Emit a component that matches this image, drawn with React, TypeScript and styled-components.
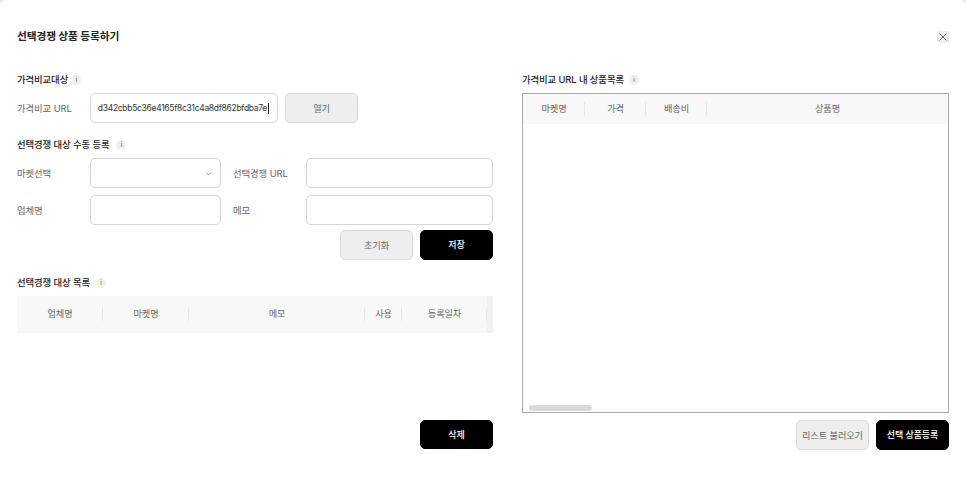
import React from 'react';
import styled, { createGlobalStyle } from 'styled-components';

const GlobalStyle = createGlobalStyle`
  html, body {
    margin: 0;
    padding: 0;
    background: #ececec;
  }
  * {
    box-sizing: border-box;
  }
`;

const Modal = styled.div`
  width: 966px;
  height: 479px;
  padding: 29px 17px 0 17px;
  overflow: hidden;
  border-radius: 7px 7px 0 0;
  background: #fff;
  color: #222;
  font-family: Inter, "Noto Sans CJK KR", sans-serif;
  font-size: 9.4px;
  letter-spacing: -0.1px;
`;

const Header = styled.header`
  display: flex;
  align-items: center;
  justify-content: space-between;
  height: 16px;
`;

const ModalTitle = styled.h1`
  margin: 0;
  font-size: 10.7px;
  font-weight: 700;
  line-height: 16px;
  color: #222;
`;

const CloseButton = styled.button`
  display: flex;
  align-items: center;
  justify-content: center;
  width: 12px;
  height: 12px;
  padding: 0;
  border: 0;
  border-radius: 2px;
  background: #eeeeee;
  color: #666;
`;

const Columns = styled.div`
  display: grid;
  grid-template-columns: 476px 427px;
  justify-content: space-between;
  margin-top: 29px;
`;

const Column = styled.section`
  display: flex;
  flex-direction: column;
`;

const SectionTitle = styled.h2<{ $gap?: number }>`
  display: flex;
  align-items: center;
  gap: ${(p) => p.$gap ?? 3}px;
  height: 12px;
  margin: 0;
  font-size: 9.4px;
  font-weight: 500;
  line-height: 12px;
  color: #222;
`;

const InfoDot = styled.span`
  display: inline-flex;
  align-items: center;
  justify-content: center;
  width: 10px;
  height: 10px;
  border-radius: 50%;
  background: #f0f0f0;
  color: #777;
  font-size: 6px;
  font-weight: 600;
`;

const UrlRow = styled.div`
  display: flex;
  align-items: center;
  height: 30px;
  margin-top: 7px;
`;

const FieldLabel = styled.label<{ $width: number }>`
  flex: none;
  width: ${(p) => p.$width}px;
  color: #666;
`;

const Box = styled.div<{ $width: number }>`
  display: flex;
  align-items: center;
  flex: none;
  width: ${(p) => p.$width}px;
  height: 30px;
  border: 1px solid #d6d6d6;
  border-radius: 5px;
  background: #fff;
`;

const UrlBox = styled(Box)`
  justify-content: flex-end;
  padding-right: 8px;
  overflow: hidden;
`;

const UrlValue = styled.span`
  flex: none;
  color: #333;
  font-size: 8.5px;
  letter-spacing: -0.3px;
  white-space: nowrap;
`;

const Caret = styled.i`
  flex: none;
  width: 1px;
  height: 11px;
  margin-left: 1px;
  background: #222;
`;

const SelectBox = styled(Box)`
  justify-content: flex-end;
  padding-right: 8px;
  color: #888;
`;

const Button = styled.button<{ $primary?: boolean; $width?: number }>`
  flex: none;
  width: ${(p) => p.$width ?? 73}px;
  height: 29.5px;
  padding: 0;
  border: 1px solid ${(p) => (p.$primary ? '#000' : '#d9d9d9')};
  border-radius: 5px;
  background: ${(p) => (p.$primary ? '#000' : '#eeeeee')};
  color: ${(p) => (p.$primary ? '#fff' : '#666')};
  font-family: inherit;
  font-size: ${(p) => (p.$primary ? 9 : 9.2)}px;
  font-weight: ${(p) => (p.$primary ? 500 : 400)};
  letter-spacing: -0.1px;
`;

const OpenButton = styled(Button)`
  margin-left: 7px;
`;

const ManualTitle = styled(SectionTitle)`
  margin-top: 16px;
`;

const FormGrid = styled.div`
  display: grid;
  grid-template-columns: 73px 131px 85px 187px;
  grid-auto-rows: 30px;
  row-gap: 7px;
  align-items: center;
  margin-top: 7px;
`;

const FormLabel = styled.label<{ $indent?: boolean }>`
  padding-left: ${(p) => (p.$indent ? 12 : 0)}px;
  color: #666;
`;

const ActionRow = styled.div<{ $top: number }>`
  display: flex;
  justify-content: flex-end;
  gap: 7px;
  margin-top: ${(p) => p.$top}px;
`;

const ListTitle = styled(SectionTitle)`
  margin-top: 17px;
`;

const GridHeader = styled.div<{ $columns: string }>`
  display: grid;
  grid-template-columns: ${(p) => p.$columns};
  align-items: center;
  height: 37px;
  background: #f8f8f8;
`;

const ListHeader = styled(GridHeader)`
  margin-top: 7px;
`;

const HeaderCell = styled.div<{ $divider?: boolean }>`
  position: relative;
  color: #666;
  font-size: 9.2px;
  text-align: center;
  line-height: 14px;

  &::after {
    content: '';
    display: ${(p) => (p.$divider ? 'block' : 'none')};
    position: absolute;
    top: 0;
    right: 0;
    width: 1px;
    height: 14px;
    background: #e8e8e8;
  }
`;

const ScrollGutter = styled.div`
  align-self: stretch;
  background: #f1f1f1;
`;

const ListSpacer = styled.div`
  height: 87px;
`;

const ProductGrid = styled.div`
  display: flex;
  flex-direction: column;
  justify-content: space-between;
  height: 320px;
  margin-top: 7px;
  border: 1px solid #a8a8a8;
  background: #fff;
`;

const ProductHeader = styled(GridHeader)`
  height: 30px;
`;

const ScrollTrack = styled.div`
  padding: 0 0 1px 6px;
`;

const ScrollThumb = styled.div`
  width: 63px;
  height: 6px;
  border-radius: 3px;
  background: #d9d9d9;
`;

const InfoIcon: React.FC = () => <InfoDot>i</InfoDot>;

const App: React.FC = () => {
  return (
    <>
      <GlobalStyle />
      <Modal>
        <Header>
          <ModalTitle>선택경쟁 상품 등록하기</ModalTitle>
          <CloseButton aria-label="닫기">
            <svg width="12" height="12" viewBox="0 0 12 12" fill="none" stroke="currentColor" strokeWidth="1">
              <path d="M2.5 2.5l7 7M9.5 2.5l-7 7" />
            </svg>
          </CloseButton>
        </Header>
        <Columns>
          <Column>
            <SectionTitle>
              가격비교대상 <InfoIcon />
            </SectionTitle>
            <UrlRow>
              <FieldLabel $width={73}>가격비교 URL</FieldLabel>
              <UrlBox $width={188}>
                <UrlValue>d342cbb5c36e4165f8c31c4a8df862bfdba7e</UrlValue>
                <Caret />
              </UrlBox>
              <OpenButton>열기</OpenButton>
            </UrlRow>
            <ManualTitle $gap={7}>
              선택경쟁 대상 수동 등록 <InfoIcon />
            </ManualTitle>
            <FormGrid>
              <FormLabel>마켓선택</FormLabel>
              <SelectBox $width={131}>
                <svg width="7" height="7" viewBox="0 0 8 8" fill="none" stroke="currentColor" strokeWidth="1">
                  <path d="M1.5 3l2.5 2.5L6.5 3" />
                </svg>
              </SelectBox>
              <FormLabel $indent>선택경쟁 URL</FormLabel>
              <Box $width={187} />
              <FormLabel>업체명</FormLabel>
              <Box $width={131} />
              <FormLabel $indent>메모</FormLabel>
              <Box $width={187} />
            </FormGrid>
            <ActionRow $top={5}>
              <Button>초기화</Button>
              <Button $primary>저장</Button>
            </ActionRow>
            <ListTitle $gap={6}>
              선택경쟁 대상 목록 <InfoIcon />
            </ListTitle>
            <ListHeader $columns="86px 86px 176px 37px 85px 1fr">
              <HeaderCell $divider>업체명</HeaderCell>
              <HeaderCell $divider>마켓명</HeaderCell>
              <HeaderCell $divider>메모</HeaderCell>
              <HeaderCell $divider>사용</HeaderCell>
              <HeaderCell $divider>등록일자</HeaderCell>
              <ScrollGutter />
            </ListHeader>
            <ListSpacer />
            <ActionRow $top={0}>
              <Button $primary>삭제</Button>
            </ActionRow>
          </Column>
          <Column>
            <SectionTitle $gap={5}>
              가격비교 URL 내 상품목록 <InfoIcon />
            </SectionTitle>
            <ProductGrid>
              <ProductHeader $columns="62px 61px 61px 1fr">
                <HeaderCell $divider>마켓명</HeaderCell>
                <HeaderCell $divider>가격</HeaderCell>
                <HeaderCell $divider>배송비</HeaderCell>
                <HeaderCell>상품명</HeaderCell>
              </ProductHeader>
              <ScrollTrack>
                <ScrollThumb />
              </ScrollTrack>
            </ProductGrid>
            <ActionRow $top={7}>
              <Button>리스트 불러오기</Button>
              <Button $primary>선택 상품등록</Button>
            </ActionRow>
          </Column>
        </Columns>
      </Modal>
    </>
  );
};

export default App;
